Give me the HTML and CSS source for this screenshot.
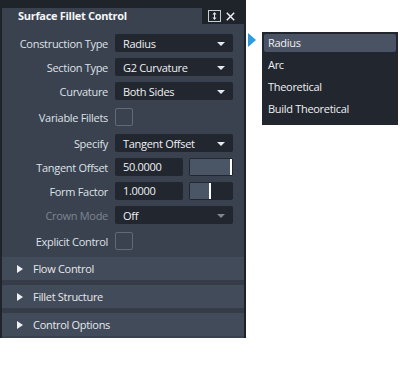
FILE: index.html
```html
<!DOCTYPE html>
<html>
<head>
<meta charset="utf-8">
<link rel="stylesheet" href="styles.css">
</head>
<body>
<div class="stage">
  <div class="panel">
    <div class="inner">
      <div class="header">
        <div class="title">Surface Fillet Control</div>
        <div class="tools">
          <svg class="pin" width="13" height="12" viewBox="0 0 13 12">
            <rect x="0.5" y="0.5" width="12" height="11" fill="none" stroke="#c9ced6" stroke-width="1"/>
            <path d="M6.5 2 L4.5 4.5 H8.5 Z M6.5 10 L4.5 7.5 H8.5 Z" fill="#e6e9ee"/>
            <rect x="6" y="4" width="1" height="4" fill="#e6e9ee"/>
          </svg>
          <svg class="close" width="9" height="9" viewBox="0 0 9 9">
            <path d="M0.8 0.8 L8.2 8.2 M8.2 0.8 L0.8 8.2" stroke="#eef0f3" stroke-width="1.5"/>
          </svg>
        </div>
      </div>
      <div class="rows">
        <div class="row">
          <div class="label">Construction Type</div>
          <div class="dropdown"><span>Radius</span><i class="caret"></i></div>
        </div>
        <div class="row">
          <div class="label">Section Type</div>
          <div class="dropdown"><span>G2 Curvature</span><i class="caret"></i></div>
        </div>
        <div class="row">
          <div class="label">Curvature</div>
          <div class="dropdown"><span>Both Sides</span><i class="caret"></i></div>
        </div>
        <div class="row row-check">
          <div class="label">Variable Fillets</div>
          <div class="check"></div>
        </div>
        <div class="row">
          <div class="label">Specify</div>
          <div class="dropdown"><span>Tangent Offset</span><i class="caret"></i></div>
        </div>
        <div class="row">
          <div class="label">Tangent Offset</div>
          <div class="input">50.0000</div>
          <div class="slider"><div class="fill" style="width: 40px"></div><div class="knob"></div></div>
        </div>
        <div class="row">
          <div class="label">Form Factor</div>
          <div class="input">1.0000</div>
          <div class="slider"><div class="fill" style="width: 19px"></div><div class="knob"></div></div>
        </div>
        <div class="row">
          <div class="label disabled">Crown Mode</div>
          <div class="dropdown"><span>Off</span><i class="caret dim"></i></div>
        </div>
        <div class="row row-check">
          <div class="label">Explicit Control</div>
          <div class="check"></div>
        </div>
      </div>
      <div class="sections">
        <div class="section"><i class="tri"></i><span>Flow Control</span></div>
        <div class="section"><i class="tri"></i><span>Fillet Structure</span></div>
        <div class="section"><i class="tri"></i><span>Control Options</span></div>
      </div>
    </div>
  </div>
  <div class="popup-wrap">
    <i class="pointer"></i>
    <ul class="menu">
      <li class="active">Radius</li>
      <li>Arc</li>
      <li>Theoretical</li>
      <li>Build Theoretical</li>
    </ul>
  </div>
</div>
</body>
</html>
```
FILE: styles.css
```css
* { box-sizing: border-box; }
html, body { margin: 0; padding: 0; background: #ffffff; }
body {
  font-family: "Open Sans", "Noto Sans", sans-serif;
  font-size: 11px;
  letter-spacing: -0.3px;
  color: #dfe3e8;
}
.stage {
  display: flex;
  align-items: flex-start;
}
.panel {
  width: 246px;
  background: #1f232a;
  padding: 8px 2px 0 2px;
}
.inner {
  background: #3a4250;
  padding-bottom: 2px;
}
.header {
  height: 16px;
  display: flex;
  justify-content: space-between;
  align-items: stretch;
}
.title {
  font-weight: bold;
  color: #f4f5f7;
  padding-left: 16px;
  line-height: 16px;
  font-size: 11px;
}
.tools {
  width: 42px;
  background: #1f232a;
  display: flex;
  align-items: center;
  gap: 5px;
  padding-left: 6px;
}
.rows {
  display: flex;
  flex-direction: column;
  gap: 6px;
  padding-top: 10px;
}
.row {
  display: flex;
  align-items: center;
  height: 18px;
}
.row-check { height: 22px; }
.label {
  width: 106px;
  text-align: right;
  margin-right: 7px;
  white-space: nowrap;
  color: #dde1e6;
}
.label.disabled { color: #7d8591; }
.dropdown {
  width: 118px;
  height: 18px;
  background: #22262e;
  border-radius: 2px;
  display: flex;
  align-items: center;
  justify-content: space-between;
  padding: 0 8px 0 8px;
  color: #eef0f3;
}
.caret {
  width: 0; height: 0;
  border-left: 4px solid transparent;
  border-right: 4px solid transparent;
  border-top: 4px solid #e6e9ee;
  margin-top: 1px;
}
.caret.dim { border-top-color: #7d8591; }
.check {
  width: 18px;
  height: 18px;
  border: 1px solid #5f6a7a;
  border-radius: 2px;
}
.input {
  width: 68px;
  height: 18px;
  background: #22262e;
  border-radius: 2px;
  padding-left: 8px;
  line-height: 18px;
  color: #eef0f3;
}
.slider {
  width: 44px;
  height: 18px;
  margin-left: 6px;
  background: #22262e;
  border: 1px solid #22262e;
  border-radius: 2px;
  position: relative;
  display: flex;
}
.slider .fill {
  height: 100%;
  background: #4a5566;
}
.slider .knob {
  width: 2px;
  height: 100%;
  background: #ffffff;
}
.sections {
  display: flex;
  flex-direction: column;
  gap: 5px;
  margin-top: 5px;
  background: #353c48;
}
.section {
  height: 23px;
  background: #424b59;
  display: flex;
  align-items: center;
  padding-left: 15px;
  color: #e6e9ee;
}
.tri {
  width: 0; height: 0;
  border-top: 4.5px solid transparent;
  border-bottom: 4.5px solid transparent;
  border-left: 6px solid #eef0f3;
  margin-right: 10px;
}
.popup-wrap {
  display: flex;
  align-items: flex-start;
  margin-top: 32px;
  margin-left: 2px;
}
.pointer {
  width: 0; height: 0;
  border-top: 7.5px solid transparent;
  border-bottom: 7.5px solid transparent;
  border-left: 8px solid #2e9be0;
  margin-top: 1px;
  margin-right: 6px;
}
.menu {
  list-style: none;
  margin: 0;
  padding: 2px 2px 3px 2px;
  width: 136px;
  background: #22262e;
}
.menu li {
  height: 22px;
  line-height: 18px;
  padding: 0 4px;
  color: #eef0f3;
  border-radius: 2px;
}
.menu li.active {
  height: 18px;
  margin-bottom: 4px;
  background: #4a5363;
}
```
